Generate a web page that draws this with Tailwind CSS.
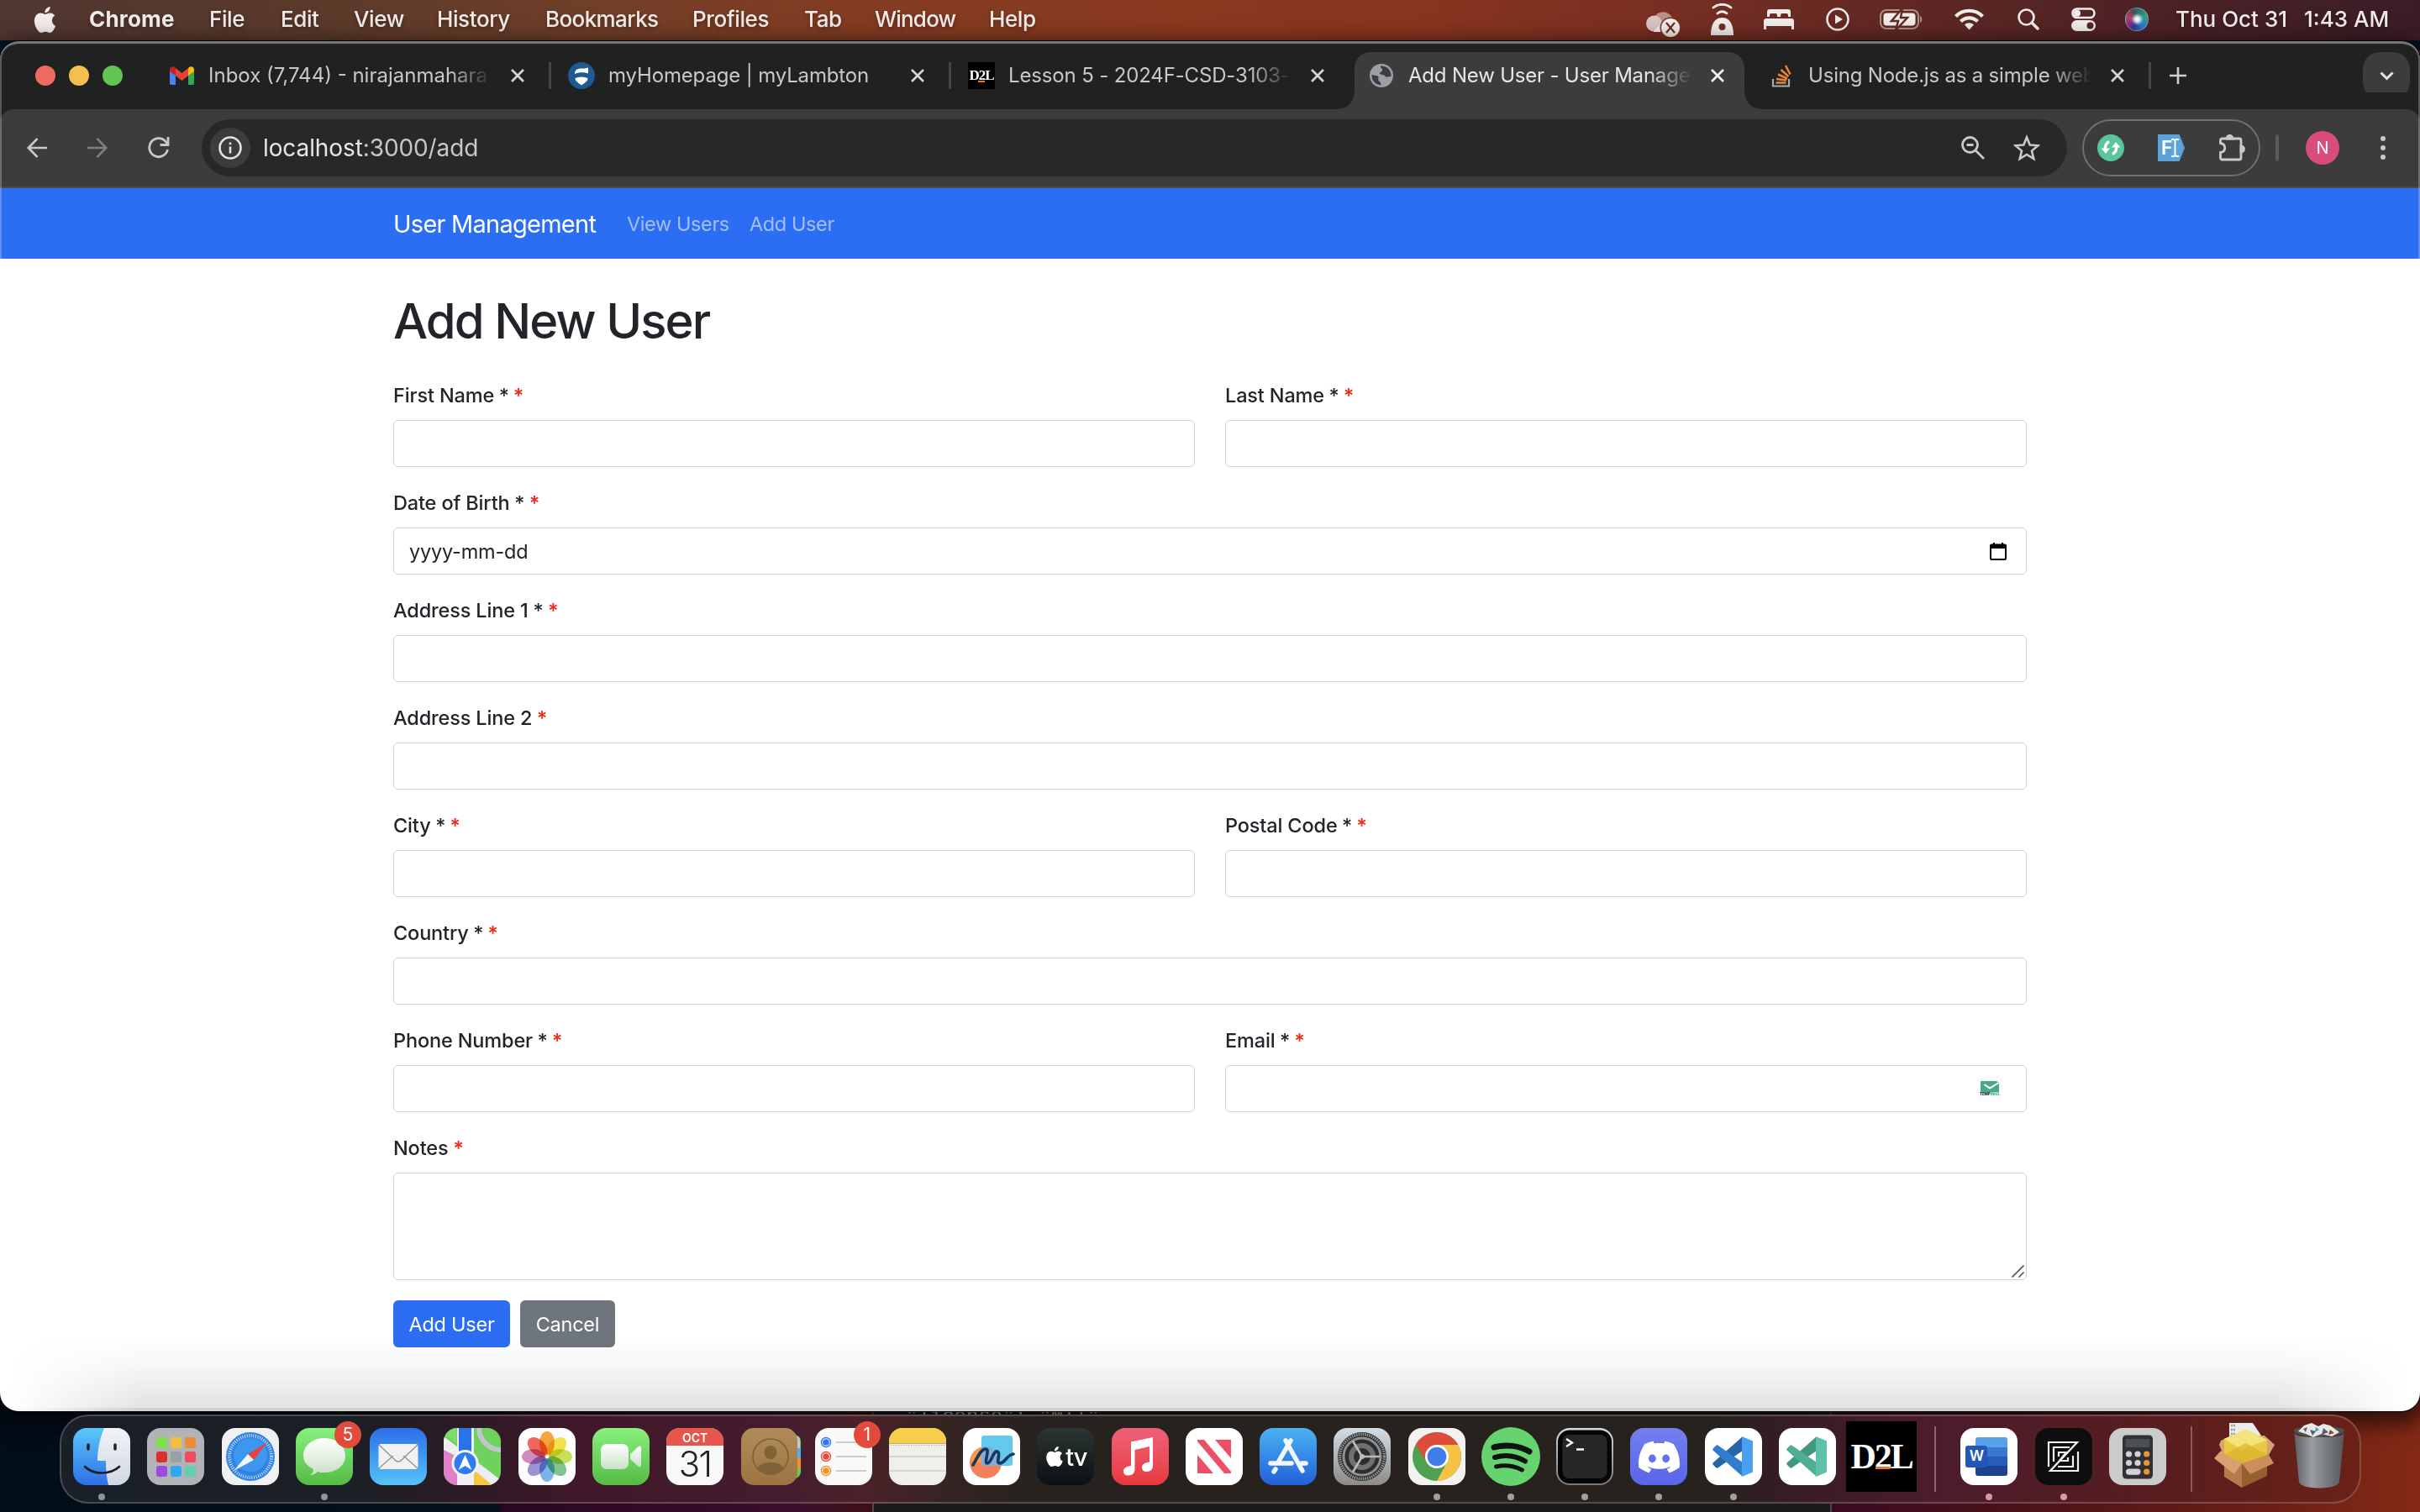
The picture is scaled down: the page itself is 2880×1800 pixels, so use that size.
<!DOCTYPE html>
<html lang="en">
<head>
<meta charset="utf-8">
<title>Add New User - User Management</title>
<script src="https://cdn.jsdelivr.net/npm/@tailwindcss/browser@4"></script>
</head>
<body class="relative h-[1800px] w-[2880px] overflow-hidden bg-[#04101c] font-['Inter','Liberation_Sans',sans-serif]">

<!-- Wallpaper -->
<div class="absolute inset-0 bg-[linear-gradient(90deg,#020d1a_0,#04101c_590px,#2a0720_600px,#3a0f2c_960px,#3d1015_1038px,#3a0a22_2178px,#4a1218_2400px,#6b1f15_2700px,#842a16_2880px)]"></div>
<div class="absolute inset-x-0 top-0 h-[60px] bg-[linear-gradient(90deg,#031730_0,#041a33_635px,#e8963c_636px,#c8622a_1200px,#a83c1c_1920px,#5a1a1c_2170px,#0a1730_2240px,#031022_2880px)]"></div>

<!-- Editor window behind the browser -->
<div class="absolute left-[1038px] top-[1600px] h-[200px] w-[1142px] border-x-2 border-[#4a4a4a] bg-[#1b1b1b] pl-[38px] pt-[73px] font-['Liberation_Mono',monospace] text-[24px] leading-[28px] text-[#c0c0c0]">"license": "MIT"</div>

<!-- Menu bar -->
<header class="relative flex h-12 items-center bg-[linear-gradient(90deg,#4f3631_0,#5c3a2a_400px,#703f28_700px,#823c22_1000px,#8a391f_1400px,#87351f_1700px,#792f22_1960px,#652923_2200px,#4c2226_2560px,#3a1d26_2880px)] pb-[2px] text-[26px] font-medium leading-[46px] text-[#f1ebe9] [text-shadow:0_2px_5px_rgba(0,0,0,0.35)]">
  <svg class="ml-[38px] size-[31px] shrink-0" viewBox="0 0 24 24" fill="#f1ebe9"><path d="M12.152 6.896c-.948 0-2.415-1.078-3.96-1.04-2.04.027-3.91 1.183-4.961 3.014-2.117 3.675-.546 9.103 1.519 12.09 1.013 1.454 2.208 3.09 3.792 3.039 1.52-.065 2.09-.987 3.935-.987 1.831 0 2.35.987 3.96.948 1.637-.026 2.676-1.48 3.676-2.948 1.156-1.688 1.636-3.325 1.662-3.415-.039-.013-3.182-1.221-3.22-4.857-.026-3.04 2.48-4.494 2.597-4.559-1.429-2.09-3.623-2.324-4.39-2.376-2-.156-3.675 1.09-4.61 1.09zM15.53 3.83c.843-1.012 1.4-2.427 1.245-3.83-1.207.052-2.662.805-3.532 1.818-.78.896-1.454 2.338-1.273 3.714 1.338.104 2.715-.688 3.559-1.701"/></svg>
  <nav class="flex pl-[37px] tracking-[-0.4px]">
    <span class="w-[143px] font-bold tracking-[0.2px]">Chrome</span>
    <span class="w-[85px]">File</span>
    <span class="w-[87px]">Edit</span>
    <span class="w-[99px]">View</span>
    <span class="w-[129px]">History</span>
    <span class="w-[175px] tracking-[-0.6px]">Bookmarks</span>
    <span class="w-[133px]">Profiles</span>
    <span class="w-[84px]">Tab</span>
    <span class="w-[136px] tracking-[-0.8px]">Window</span>
    <span>Help</span>
  </nav>
  <div class="ml-auto flex items-center">
    <svg class="mr-[36px] h-9 w-[42px] translate-y-1" viewBox="0 0 42 36"><path d="M10 13a12 12 0 0 1 23 2l-12 14z" fill="#b98e86"/><circle cx="10.500" cy="19" r="9.500" fill="#d9c4c0"/><path d="M10 28 24 14c6-1 9 2 10 6l-6 9H10z" fill="#f1ebe9"/><circle cx="30" cy="24" r="12.500" fill="#78301f"/><circle cx="30" cy="24" r="11" fill="#f1ebe9"/><path d="m25 18 10 12m0-12L25 30" stroke="#6b2c22" stroke-width="2.200"/></svg>
    <svg class="mr-[36px] h-[38px] w-[27px]" viewBox="0 0 27 38" fill="none" stroke="#f1ebe9"><path d="M3 5c6-5 15-5 21 0M8 12c3-3 8-3 11 0" stroke-width="2.800" stroke-linecap="round"/><path d="M0 38c0-10 3-21 13.500-21S27 28 27 38z" fill="#f1ebe9" stroke="none"/><circle cx="13.500" cy="28" r="4" fill="#742f23" stroke="none"/></svg>
    <svg class="mr-[38px] h-6 w-9" viewBox="0 0 36 24" fill="#f1ebe9"><path d="M4 9V3a3 3 0 0 1 3-3h22a3 3 0 0 1 3 3v6h-3V7a2 2 0 0 0-2-2h-5a2 2 0 0 0-2 2v2h-4V7a2 2 0 0 0-2-2H9a2 2 0 0 0-2 2v2z"/><path d="M0 24V14a3 3 0 0 1 3-3h30a3 3 0 0 1 3 3v10h-3v-4H3v4z"/></svg>
    <svg class="mr-[36px] size-[28px]" viewBox="0 0 28 28"><circle cx="14" cy="14" r="12.500" fill="none" stroke="#f1ebe9" stroke-width="2.500"/><path d="M11 8.500v11l9-5.500z" fill="#f1ebe9"/></svg>
    <svg class="mr-[37px] h-[26px] w-[52px]" viewBox="0 0 52 26"><rect x="1" y="2" width="45" height="22" rx="7" fill="none" stroke="#ad8d88" stroke-width="2"/><path d="M48 9c3 1 3 7 0 8z" fill="#ad8d88"/><rect x="4.500" y="5.500" width="38" height="15" rx="4" fill="#f1ebe9"/><path d="M27 0 14 15h8l-3 11 14-15h-8z" fill="#f1ebe9" stroke="#652923" stroke-width="2.500"/></svg>
    <svg class="mr-[40px] h-[26px] w-[35px]" viewBox="0 0 35 26" fill="none" stroke="#f1ebe9" stroke-width="4.200"><path d="M1.500 9.500C10 .5 25 .5 33.500 9.500"/><path d="M7.500 15.500c5.500-5.500 14.500-5.500 20 0"/><path d="M17.500 25.500 12 19.500c3-3 8-3 11 0z" fill="#f1ebe9" stroke="none"/></svg>
    <svg class="mr-[38px] size-[26px]" viewBox="0 0 26 26" fill="none" stroke="#f1ebe9"><circle cx="10.500" cy="10.500" r="9" stroke-width="2.600"/><path d="m17 17 7 7" stroke-width="3.600" stroke-linecap="round"/></svg>
    <svg class="mr-[35px] h-7 w-[29px]" viewBox="0 0 29 28"><rect x="1.500" y="1.500" width="26" height="10.500" rx="5.250" fill="none" stroke="#f1ebe9" stroke-width="2.600"/><circle cx="7" cy="6.700" r="4" fill="#f1ebe9"/><rect y="15" width="29" height="13" rx="6.500" fill="#f1ebe9"/><circle cx="22.500" cy="21.500" r="4" fill="#552528"/></svg>
    <span class="mr-[32px] block size-[28px] rounded-full border border-white/30 bg-[radial-gradient(circle_at_52%_50%,#fff_0,#d8e8f8_14%,transparent_38%),conic-gradient(#2f6b60,#2fa08a_20%,#2b78c8_40%,#2a3a9a_55%,#7a2f80_65%,#b8406a_78%,#504a52_92%,#2f6b60)]"></span>
    <span class="mr-[16px] w-[137px] whitespace-nowrap">Thu Oct 31</span>
    <span class="w-[100px] whitespace-nowrap">1:43 AM</span>
    <span class="w-[38px]"></span>
  </div>
</header>

<!-- Browser window -->
<div class="absolute left-0 top-[49px] flex h-[1631px] w-[2880px] flex-col overflow-hidden rounded-[22px] border-t-[3px] border-t-[#747776] bg-white shadow-[0_0_0_1px_#000,0_8px_24px_8px_rgba(0,0,0,0.6)]">
  <!-- Tab strip -->
  <div class="flex h-[78px] shrink-0 items-center bg-[#1f2221] pb-[2px] text-[24px] leading-[30px] tracking-[-0.15px] text-[#c7c8c7]">
    <div class="flex w-[180px] shrink-0 gap-4 pl-[42px]">
      <span class="size-6 rounded-full bg-[#ec6a5e]"></span><span class="size-6 rounded-full bg-[#f4bf4f]"></span><span class="size-6 rounded-full bg-[#61c554]"></span>
    </div>
    <div class="flex h-8 w-[476px] shrink-0 items-center border-r-[3px] border-[#434645] pl-[22px]">
      <svg class="h-[22px] w-[29px]" viewBox="0 0 29 22"><path d="M0 5v15a2 2 0 0 0 2 2h5V8z" fill="#4285f4"/><path d="M29 5v15a2 2 0 0 1-2 2h-5V8z" fill="#34a853"/><path d="M22 2v9l7-5V4c0-4-4-5-6.500-2.500z" fill="#fbbc04"/><path d="M7 2v9L0 6V4c0-4 4-5 6.500-2.500z" fill="#c5221f"/><path d="M7 2v9l7.500 6 7.500-6V2l-7.500 6z" fill="#ea4335"/></svg>
      <span class="ml-[17px] w-[340px] overflow-hidden whitespace-nowrap tracking-normal [mask-image:linear-gradient(90deg,#000_286px,transparent_338px)]">Inbox (7,744) - nirajanmahara</span>
      <svg class="ml-[19px] size-[18px]" viewBox="0 0 18 18" stroke="#d5d6d5" stroke-width="2.600"><path d="m2 2 14 14M16 2 2 16"/></svg>
    </div>
    <div class="flex h-8 w-[476px] shrink-0 items-center border-r-[3px] border-[#434645] pl-[20px]">
      <svg class="size-8" viewBox="0 0 32 32"><circle cx="16" cy="16" r="16" fill="#1f5a93"/><path d="M8 13.500c0-4 3-6 8-6 4 0 7-.5 8-1v7c-4-1.500-11-2-16 .5z" fill="#fff"/><path d="M8.500 19c5-2 10-2 15 0 0 4-4 6-7.500 8.500-3-2.500-7.500-4.500-7.500-8.500z" fill="#fff"/></svg>
      <span class="ml-4 w-[340px] whitespace-nowrap">myHomepage | myLambton</span>
      <svg class="ml-[19px] size-[18px]" viewBox="0 0 18 18" stroke="#d5d6d5" stroke-width="2.600"><path d="m2 2 14 14M16 2 2 16"/></svg>
    </div>
    <div class="flex h-8 w-[476px] shrink-0 items-center pl-[20px]">
      <span class="relative flex size-8 justify-center bg-black font-['Liberation_Serif',serif] text-[17px] font-bold leading-8 tracking-[-1px] text-white">D2L<i class="absolute bottom-[8px] left-[12px] h-[2px] w-[8px] bg-[#e87722]"></i></span>
      <span class="ml-4 w-[340px] overflow-hidden whitespace-nowrap [mask-image:linear-gradient(90deg,#000_286px,transparent_338px)]">Lesson 5 - 2024F-CSD-3103-</span>
      <svg class="ml-[19px] size-[18px]" viewBox="0 0 18 18" stroke="#d5d6d5" stroke-width="2.600"><path d="m2 2 14 14M16 2 2 16"/></svg>
    </div>
    <!-- Active tab -->
    <div class="relative flex h-[78px] w-[476px] shrink-0 items-center pl-[20px] text-[#e6e6e6]">
      <svg class="absolute left-[-20px] top-[11px] h-[68px] w-[512px]" viewBox="0 0 512 68" fill="#3c3c3c"><path d="M0 68c16 0 24-8 24-24V20C24 8 32 0 44 0h424c12 0 20 8 20 20v24c0 16 8 24 24 24z"/></svg>
      <svg class="relative ml-[2px] size-7" viewBox="0 0 28 28"><circle cx="14" cy="14" r="14" fill="#9aa0a8"/><path d="M13 2.500c-1 2 3 3 2 5.500-.5 2-3 1.500-3 3.500 0 1.500 4 1 6 2.500 1 3 4 1 7.500 1A11.500 11.500 0 0 0 13 2.500zM2.500 13c3 1 7 .5 8 2.500.5 2-1 3 0 4.500s3 1 3 5.500A11.600 11.600 0 0 1 2.500 13z" fill="#3c3c3c"/></svg>
      <span class="relative ml-[18px] w-[340px] overflow-hidden whitespace-nowrap tracking-[-0.2px] [mask-image:linear-gradient(90deg,#000_286px,transparent_338px)]">Add New User - User Manage</span>
      <svg class="relative ml-[19px] size-[18px]" viewBox="0 0 18 18" stroke="#f0f0f0" stroke-width="2.800"><path d="m2 2 14 14M16 2 2 16"/></svg>
    </div>
    <div class="flex h-8 w-[476px] shrink-0 items-center border-r-[3px] border-[#434645] pl-[24px]">
      <svg class="h-7 w-6" viewBox="0 0 24 28" fill="none"><path d="M2 18v8.500h19V18" stroke="#a9abae" stroke-width="2.200"/><path d="M5.500 22.500h12M6 18l12 1.500M8 12.500l11 5M11.500 7l9 8M17 2l5.500 10.500" stroke="#e8833a" stroke-width="2.600"/></svg>
      <span class="ml-[20px] w-[348px] overflow-hidden whitespace-nowrap tracking-[-0.2px] [mask-image:linear-gradient(90deg,#000_286px,transparent_338px)]">Using Node.js as a simple web</span>
      <svg class="ml-[11px] size-[18px]" viewBox="0 0 18 18" stroke="#d5d6d5" stroke-width="2.600"><path d="m2 2 14 14M16 2 2 16"/></svg>
    </div>
    <svg class="ml-[22px] size-5" viewBox="0 0 20 20" stroke="#cfd0cf" stroke-width="2.600"><path d="M10 0v20M0 10h20"/></svg>
    <span class="ml-auto mr-[12px] flex size-14 items-center justify-center rounded-[20px] bg-[#3c3c3c]"><svg class="h-[11px] w-[17px]" viewBox="0 0 17 11" fill="none" stroke="#e6e6e6" stroke-width="3"><path d="m1.500 1.500 7 7 7-7"/></svg></span>
  </div>

  <!-- Toolbar -->
  <div class="flex h-[94px] shrink-0 items-center rounded-t-[16px] border-b-2 border-[#4a4a4a] bg-[#3c3c3c] shadow-[0_-20px_0_0_#1f2221]">
    <svg class="ml-[32px] size-6" viewBox="0 0 24 24" fill="none" stroke="#c9c9c9" stroke-width="2.600"><path d="M24 12H2M12.500 1 1.800 12l10.700 11"/></svg>
    <svg class="ml-[48px] size-6" viewBox="0 0 24 24" fill="none" stroke="#7f7f7f" stroke-width="2.600"><path d="M0 12h22M11.500 1l10.700 11-10.700 11"/></svg>
    <svg class="ml-[48px] size-[26px]" viewBox="0 0 26 26" fill="none" stroke="#c9c9c9" stroke-width="2.800"><path d="M23.500 15A11 11 0 1 1 21.500 6L24 9"/><path d="M24 0v9.500h-9.500"/></svg>
    <div class="ml-[38px] flex h-[68px] w-[2220px] items-center rounded-full bg-[#282828] pl-[10px]">
      <span class="flex size-12 items-center justify-center rounded-full bg-[#3c3c3c]"><svg class="size-7" viewBox="0 0 28 28"><circle cx="14" cy="14" r="12.500" fill="none" stroke="#e3e3e3" stroke-width="2.600"/><path d="M12.700 12.500h2.600v8h-2.600zM12.700 7.500h2.600v2.800h-2.600z" fill="#e3e3e3"/></svg></span>
      <span class="ml-[15px] text-[28px] leading-9 tracking-[-0.1px] text-[#c7c7c7]"><span class="text-[#e6e6e6]">localhost</span>:3000/add</span>
      <svg class="ml-auto size-7" viewBox="0 0 28 28" fill="none" stroke="#c9c9c9" stroke-width="2.800"><circle cx="10.500" cy="10.500" r="9"/><path d="M6.500 10.500h8M17 17l10 10"/></svg>
      <svg class="ml-[34px] mr-[32px] size-8" viewBox="0 0 32 32" fill="none" stroke="#c9c9c9" stroke-width="2.600"><path d="m16 3.500 3.700 9 9.700.8-7.400 6.300 2.300 9.500L16 24l-8.300 5.100L10 19.600l-7.400-6.300 9.700-.8z"/></svg>
    </div>
    <div class="ml-[18px] flex h-[68px] w-[212px] items-center rounded-full border-2 border-[#707070] pl-4">
      <svg class="size-8" viewBox="0 0 32 32"><circle cx="16" cy="16" r="16" fill="#58c59a"/><g fill="none" stroke="#fff" stroke-width="3.400"><path d="M9.500 17c-.5-4 1-6.500 4.500-8.500M22.500 15c.5 4-1 6.500-4.500 8.500"/></g><path d="M4.500 16.500h10.500l-5 6.500zM27.500 15.500H17l5-6.500z" fill="#fff"/></svg>
      <span class="relative ml-[40px] flex h-8 w-8 items-center bg-[#5ca2dc] pl-[4px] text-[23px] font-semibold text-white [clip-path:polygon(0_0,80%_0,100%_50%,80%_100%,0_100%)]">F<svg class="absolute left-[15px] top-[5px] h-[22px] w-[11px]" viewBox="0 0 11 22" fill="none" stroke="#fff" stroke-width="2"><path d="M1 1h3l1.500 1L7 1h3M1 21h3l1.500-1L7 21h3M5.500 2v18"/></svg></span>
      <svg class="ml-[39px] h-[34px] w-[34px]" viewBox="0 0 34 34" fill="none" stroke="#c9c9c9" stroke-width="2.800"><path d="M5 6h6.500M17.500 6H26a2 2 0 0 1 2 2v21a2 2 0 0 1-2 2H5.500a2 2 0 0 1-2-2v-6.500c7-1 7-10 0-11V8a2 2 0 0 1 2-2z"/><path d="M11 6a3.500 3.500 0 0 1 7 0zM28 15a3.500 3.500 0 0 1 0 7z" fill="#c9c9c9"/></svg>
    </div>
    <span class="ml-[18px] h-8 w-[4px] rounded-full bg-[#5b5b5b]"></span>
    <span class="ml-8 flex size-10 items-center justify-center rounded-full bg-[#da4c7a] text-[20px] text-white">N</span>
    <span class="ml-[49px] flex flex-col gap-[5px]"><i class="size-[6px] rounded-full bg-[#c9c9c9]"></i><i class="size-[6px] rounded-full bg-[#c9c9c9]"></i><i class="size-[6px] rounded-full bg-[#c9c9c9]"></i></span>
  </div>

  <!-- Site navigation -->
  <div class="flex h-[84px] shrink-0 items-center bg-[#2b6ef3] pl-[468px] pt-[2px] text-[23.5px] tracking-[-0.4px] text-[#a3bff9]">
    <span class="w-[278px] text-[29px] tracking-[-0.75px] text-white">User Management</span>
    <span class="w-[146px]">View Users</span>
    <span>Add User</span>
  </div>

  <!-- Form page -->
  <main class="flex w-[2412px] flex-col pl-[468px] pt-9 text-[23.5px] leading-9 text-[#212529]">
    <h1 class="mb-9 h-[72px] pt-[2px] text-[58px] font-medium leading-[72px] tracking-[-1.9px]">Add New User</h1>
    <form class="grid grid-cols-2 gap-x-9 gap-y-6 tracking-[-0.15px] [&>label>span:first-child]:pt-[2px] [&>label>span:first-child]:leading-[34px]">
      <label class="flex flex-col gap-3 font-medium"><span>First Name<b class="font-medium tracking-[-0.7px]"> * <i class="font-semibold not-italic text-[#f02a1c]">*</i></b></span><input class="h-14 rounded-[6px] border border-[#ced4da]"></label>
      <label class="flex flex-col gap-3 font-medium"><span>Last Name<b class="font-medium tracking-[-0.7px]"> * <i class="font-semibold not-italic text-[#f02a1c]">*</i></b></span><input class="h-14 rounded-[6px] border border-[#ced4da]"></label>
      <label class="col-span-2 flex flex-col gap-3 font-medium"><span>Date of Birth<b class="font-medium tracking-[-0.5px]"> * <i class="font-semibold not-italic text-[#f02a1c]">*</i></b></span>
        <span class="flex h-14 items-center justify-between rounded-[6px] border border-[#ced4da] pl-[18px] pr-[23px] pt-px font-normal tracking-[-0.2px]">yyyy-mm-dd<svg class="h-6 w-5" viewBox="0 0 20 24"><path d="M4 1h2v3H4zM14 1h2v3h-2z"/><path fill-rule="evenodd" d="M2 2.500h16a2 2 0 0 1 2 2V20a2 2 0 0 1-2 2H2a2 2 0 0 1-2-2V4.500a2 2 0 0 1 2-2zM2 8v12h16V8z"/></svg></span></label>
      <label class="col-span-2 flex flex-col gap-3 font-medium"><span>Address Line 1<b class="font-medium tracking-[-0.5px]"> * <i class="font-semibold not-italic text-[#f02a1c]">*</i></b></span><input class="h-14 rounded-[6px] border border-[#ced4da]"></label>
      <label class="col-span-2 flex flex-col gap-3 font-medium"><span>Address Line 2<b class="font-medium tracking-[-1px]"> <i class="font-semibold not-italic text-[#f02a1c]">*</i></b></span><input class="h-14 rounded-[6px] border border-[#ced4da]"></label>
      <label class="flex flex-col gap-3 font-medium"><span>City<b class="font-medium tracking-[-0.7px]"> * <i class="font-semibold not-italic text-[#f02a1c]">*</i></b></span><input class="h-14 rounded-[6px] border border-[#ced4da]"></label>
      <label class="flex flex-col gap-3 font-medium"><span>Postal Code<b class="font-medium tracking-[-0.7px]"> * <i class="font-semibold not-italic text-[#f02a1c]">*</i></b></span><input class="h-14 rounded-[6px] border border-[#ced4da]"></label>
      <label class="col-span-2 flex flex-col gap-3 font-medium"><span>Country<b class="font-medium tracking-[-0.7px]"> * <i class="font-semibold not-italic text-[#f02a1c]">*</i></b></span><input class="h-14 rounded-[6px] border border-[#ced4da]"></label>
      <label class="flex flex-col gap-3 font-medium"><span>Phone Number<b class="font-medium tracking-[-0.7px]"> * <i class="font-semibold not-italic text-[#f02a1c]">*</i></b></span><input class="h-14 rounded-[6px] border border-[#ced4da]"></label>
      <label class="flex flex-col gap-3 font-medium"><span>Email<b class="font-medium tracking-[-0.7px]"> * <i class="font-semibold not-italic text-[#f02a1c]">*</i></b></span>
        <span class="flex h-14 items-center justify-end rounded-[6px] border border-[#ced4da] pr-7"><span class="flex size-[30px] flex-col items-center rounded-[3px] bg-[#fafafa] pt-[6px]"><svg class="h-[13px] w-[22px]" viewBox="0 0 22 13"><path d="M0 0h19l3 2v11H0z" fill="#4aa78c"/><path d="m4.500 4 6.500 4.500L21.500 2" fill="none" stroke="#fff" stroke-width="2"/></svg><span class="text-[4.500px] font-black leading-[6px] tracking-[-0.1px] text-[#1d3540]">TEMP<span class="text-[#4fc0a0]">MAIL</span></span></span></span></label>
      <label class="col-span-2 flex flex-col gap-3 font-medium"><span>Notes<b class="font-medium tracking-[-0.5px]"> <i class="font-semibold not-italic text-[#f02a1c]">*</i></b></span>
        <span class="flex h-32 items-end justify-end rounded-[6px] border border-[#ced4da] p-[2px]"><svg class="size-[15px]" viewBox="0 0 15 15" stroke="#555" stroke-width="1.600"><path d="M.5 14.500l14-14M8.500 14.500l6-6"/></svg></span></label>
      <div class="flex gap-3 tracking-[-0.25px]">
        <button class="h-14 w-[139px] rounded-[6px] bg-[#2b6ef3] pt-px text-white">Add User</button>
        <button class="h-14 w-[113px] rounded-[6px] bg-[#6e757c] pt-px text-white">Cancel</button>
      </div>
    </form>
  </main>
  <!-- Dock shade cast over the page -->
  <div class="absolute bottom-0 left-0 h-[90px] w-full border-b-4 border-[#cfcfd1] bg-[linear-gradient(180deg,rgba(0,0,0,0)_0,rgba(0,0,0,0.03)_40%,rgba(0,0,0,0.11)_100%)] [mask-image:linear-gradient(90deg,transparent_10px,#000_170px,#000_2710px,transparent_2866px)]"></div>
  <!-- Window edge highlight -->
  <div class="pointer-events-none absolute inset-0 rounded-[20px] border-x-2 border-white/25"></div>
</div>

<!-- Dock -->
<div class="absolute left-[71px] top-[1684px] flex h-[106px] w-[2739px] items-center rounded-[34px] border-2 border-white/20 bg-[linear-gradient(90deg,#1a2028_0,#1b1f26_340px,#2c1b24_480px,#401829_620px,#451c2e_850px,#4a2228_960px,#342422_1060px,#28221f_1160px,#28221f_1980px,#371c25_2060px,#4a1c2c_2220px,#571d20_2480px,#6b2217_2739px)] bg-origin-border pb-[6px] pl-[4px]">
  <!-- Finder -->
  <div class="relative flex w-[88.26px] shrink-0 justify-center">
    <svg class="size-[68px] rounded-[16px]" viewBox="0 0 68 68"><defs><linearGradient id="fb" x2="0" y2="1"><stop stop-color="#5ac8fa"/><stop offset="1" stop-color="#2f6fe8"/></linearGradient><linearGradient id="fw" x2="0" y2="1"><stop stop-color="#f2f2f5"/><stop offset="1" stop-color="#cfd8e4"/></linearGradient></defs><rect width="68" height="68" fill="url(#fb)"/><path d="M37 0c-5 12-8 25-8 39h10c0 12 1 21 3 29h26V0z" fill="url(#fw)"/><path d="M18 20v5M50 20v5" stroke="#222" stroke-width="3.500" stroke-linecap="round"/><path d="M14 46c10 10 30 10 41 0" fill="none" stroke="#1d1d22" stroke-width="2.600" stroke-linecap="round"/></svg>
    <i class="absolute top-[78px] size-2 rounded-full bg-[#8f959b]"></i>
  </div>
  <!-- Launchpad -->
  <div class="flex w-[88.26px] shrink-0 justify-center"><div class="grid size-[68px] grid-cols-[repeat(3,13px)] content-center justify-center gap-[4px] rounded-[16px] bg-[#b1b3b6]"><i class="size-[13px] rounded-[3px] bg-[#7ce04a]"></i><i class="size-[13px] rounded-[3px] bg-[#f4bd3b]"></i><i class="size-[13px] rounded-[3px] bg-[#ea8d35]"></i><i class="size-[13px] rounded-[3px] bg-[#d8302a]"></i><i class="size-[13px] rounded-[3px] bg-[#9aa0a4]"></i><i class="size-[13px] rounded-[3px] bg-[#ef4c62]"></i><i class="size-[13px] rounded-[3px] bg-[#9a4be0]"></i><i class="size-[13px] rounded-[3px] bg-[#2ea8f4]"></i><i class="size-[13px] rounded-[3px] bg-[#62cfb0]"></i></div></div>
  <!-- Safari -->
  <div class="flex w-[88.26px] shrink-0 justify-center"><svg class="size-[68px] rounded-[16px]" viewBox="0 0 68 68"><rect width="68" height="68" fill="#f1f1f1"/><circle cx="34" cy="34" r="29" fill="#2f83e8"/><circle cx="34" cy="34" r="25" fill="none" stroke="#d8ebff" stroke-width="4" stroke-dasharray=".9 1.720"/><circle cx="34" cy="32" r="20" fill="#3d97ee"/><path d="M54 17 38 38l-7-7z" fill="#e8403c"/><path d="M14 51 31 31l7 7z" fill="#f4f4f6"/></svg></div>
  <!-- Messages -->
  <div class="relative flex w-[88.26px] shrink-0 justify-center">
    <svg class="size-[68px] rounded-[16px]" viewBox="0 0 68 68"><defs><linearGradient id="gr" x2="0" y2="1"><stop stop-color="#88f07f"/><stop offset="1" stop-color="#55bb45"/></linearGradient><linearGradient id="wh" x2="0" y2="1"><stop stop-color="#fff"/><stop offset="1" stop-color="#c9e0c6"/></linearGradient></defs><rect width="68" height="68" fill="url(#gr)"/><path d="M34 12c14 0 25 9 25 21S48 53 34 53c-3 0-5 0-8-1-2 2-5 4-9 4 3-2 4-4 4-7C13 45 9 40 9 33c0-12 11-21 25-21z" fill="url(#wh)"/></svg>
    <span class="absolute right-0 top-[-8px] flex size-8 items-center justify-center rounded-full bg-[#e24b3b] text-[21px] text-white">5</span>
    <i class="absolute top-[78px] size-2 rounded-full bg-[#8f959b]"></i>
  </div>
  <!-- Mail -->
  <div class="flex w-[88.26px] shrink-0 justify-center"><svg class="size-[68px] rounded-[16px] bg-linear-to-b from-[#2f6de8] to-[#57c3f7]" viewBox="0 0 68 68"><rect x="10.500" y="19" width="47" height="30" rx="3" fill="#f1f1f1"/><path d="m11 48 17-15M57 48 40 33M11 20l19 18c2 2.500 6 2.500 8 0l19-18" fill="none" stroke="#9a9a9e" stroke-width="1.600"/></svg></div>
  <!-- Maps -->
  <div class="flex w-[88.26px] shrink-0 justify-center"><svg class="size-[68px] rounded-[16px]" viewBox="0 0 68 68"><rect width="68" height="68" fill="#6fd25f"/><path d="M0 10 68 62v6H44L0 30z" fill="#eceef2"/><path d="M0 26v42h16V34z" fill="#dd82c8"/><path d="M16 0h20v68H16z" fill="#f0f0f4"/><path d="M18 0h15v32H18z" fill="#2a72ec"/><path d="M0 0h15v18L0 8z" fill="#7ddc6c"/><path d="M36 68V50l22 18z" fill="#f5c842"/><path d="M42 0c0 14 12 26 26 26" fill="none" stroke="#c2c5cc" stroke-width="6"/><circle cx="25.500" cy="42" r="16" fill="#f3f4f8"/><circle cx="25.500" cy="42" r="13" fill="#2f7bf0"/><path d="m25.500 32 8 18-8-5-8 5z" fill="#fff"/></svg></div>
  <!-- Photos -->
  <div class="flex w-[88.26px] shrink-0 justify-center"><svg class="size-[68px] rounded-[16px] bg-[#fdfdfd]" viewBox="0 0 68 68"><ellipse class="mix-blend-multiply" cx="34" cy="18" rx="9" ry="14" fill="#f5a440"/><ellipse class="mix-blend-multiply" cx="34" cy="18" rx="9" ry="14" fill="#f2e44a" transform="rotate(45 34 34)"/><ellipse class="mix-blend-multiply" cx="34" cy="18" rx="9" ry="14" fill="#cbe05c" transform="rotate(90 34 34)"/><ellipse class="mix-blend-multiply" cx="34" cy="18" rx="9" ry="14" fill="#82c692" transform="rotate(135 34 34)"/><ellipse class="mix-blend-multiply" cx="34" cy="18" rx="9" ry="14" fill="#7ab8ea" transform="rotate(180 34 34)"/><ellipse class="mix-blend-multiply" cx="34" cy="18" rx="9" ry="14" fill="#a092d4" transform="rotate(225 34 34)"/><ellipse class="mix-blend-multiply" cx="34" cy="18" rx="9" ry="14" fill="#d08cc0" transform="rotate(270 34 34)"/><ellipse class="mix-blend-multiply" cx="34" cy="18" rx="9" ry="14" fill="#f06a5c" transform="rotate(315 34 34)"/></svg></div>
  <!-- FaceTime -->
  <div class="flex w-[88.26px] shrink-0 justify-center"><svg class="size-[68px] rounded-[16px]" viewBox="0 0 68 68"><rect width="68" height="68" fill="url(#gr)"/><rect x="10" y="19" width="33" height="30" rx="7" fill="url(#wh)"/><path d="M45 31 55 22c1.500-1 3-.5 3 1.500v21c0 2-1.500 2.500-3 1.500l-10-9z" fill="url(#wh)"/></svg></div>
  <!-- Calendar -->
  <div class="flex w-[88.26px] shrink-0 justify-center"><div class="flex size-[68px] flex-col items-center overflow-hidden rounded-[16px] bg-[#f8f8f8]"><span class="h-[21px] w-full bg-[#e5574c] text-center text-[14px] font-semibold leading-[23px] text-white">OCT</span><span class="text-[42px] font-light leading-[44px] tracking-[-1.5px] text-[#222]">31</span></div></div>
  <!-- Contacts -->
  <div class="flex w-[88.26px] shrink-0 justify-center"><svg class="h-[68px] w-[71px] translate-x-[2px]" viewBox="0 0 71 68"><rect x="40" y="8" width="31" height="52" rx="8" fill="#62cf62"/><path d="M66 10c3 0 4 3 4 6v8h-4z" fill="#c8c8c8"/><path d="M66 24h5v12h-5z" fill="#53aef0"/><path d="M66 36h5v12h-5z" fill="#f0902e"/><defs><linearGradient id="br" x2="0" y2="1"><stop stop-color="#b18c58"/><stop offset="1" stop-color="#9c7443"/></linearGradient></defs><rect width="67" height="68" rx="15" fill="url(#br)"/><circle cx="35" cy="34" r="21" fill="none" stroke="#7d6038" stroke-width="1.600"/><ellipse cx="35" cy="29" rx="7.500" ry="8" fill="#806238"/><path d="M20 47c4-8 26-8 30 0-7 10-23 10-30 0z" fill="#806238"/></svg></div>
  <!-- Reminders -->
  <div class="relative flex w-[88.26px] shrink-0 justify-center">
    <svg class="size-[68px] rounded-[16px] bg-[#f9f9f8]" viewBox="0 0 68 68"><g fill="none" stroke-width="1.400"><circle cx="13" cy="17" r="5.500" stroke="#2f78f0"/><circle cx="13" cy="34" r="5.500" stroke="#e24a3c"/><circle cx="13" cy="51" r="5.500" stroke="#ea9430"/></g><circle cx="13" cy="17" r="3.800" fill="#2f78f0"/><circle cx="13" cy="34" r="3.800" fill="#e24a3c"/><circle cx="13" cy="51" r="3.800" fill="#ea9430"/><path d="M25 17h36M25 34h36M25 51h36" stroke="#bdbdbd" stroke-width="1.500"/></svg>
    <span class="absolute right-0 top-[-8px] flex size-8 items-center justify-center rounded-full bg-[#e24b3b] text-[21px] text-white">1</span>
  </div>
  <!-- Notes -->
  <div class="flex w-[88.26px] shrink-0 justify-center"><svg class="size-[68px] rounded-[16px]" viewBox="0 0 68 68"><rect width="68" height="68" fill="#f0efec"/><rect width="68" height="18" fill="#f8cf4a"/><path d="M0 18.500h68" stroke="#b9a97c"/><path d="M2 20.500h66" stroke="#b5b5b2" stroke-dasharray="1.500 1.500"/><path d="M0 34h68M0 51h68" stroke="#cfcecb" stroke-width="1.500"/></svg></div>
  <!-- Freeform -->
  <div class="flex w-[88.26px] shrink-0 justify-center"><svg class="size-[68px] rounded-[16px] bg-white" viewBox="0 0 68 68"><circle cx="27" cy="41" r="19" fill="#f28058"/><path d="M8 40a19 19 0 0 1 19-18v19z" fill="#f6a64a" opacity=".7"/><rect x="22" y="9" width="37" height="36" rx="3" fill="#58c3ee" opacity=".92"/><path d="M22 23c10-3 22 6 24 20l-2 2H25a3 3 0 0 1-3-3z" fill="#8fa6d8" opacity=".75"/><path d="M12 44c5-8 9-19 15-19s-3 17 2 17 7-16 12-14-3 14 3 14 8-10 16-11" fill="none" stroke="#14395c" stroke-width="3.600" stroke-linecap="round"/></svg></div>
  <!-- Apple TV -->
  <div class="flex w-[88.26px] shrink-0 justify-center"><div class="flex size-[68px] items-center justify-center gap-[1px] rounded-[16px] bg-linear-to-b from-[#2b3634] to-[#0c1013] text-[29px] font-medium leading-none tracking-[-1px] text-white"><svg class="size-[24px]" viewBox="0 0 24 24" fill="#fff"><path d="M12.152 6.896c-.948 0-2.415-1.078-3.960-1.040-2.040.027-3.910 1.183-4.961 3.014-2.117 3.675-.546 9.103 1.519 12.090 1.013 1.454 2.208 3.090 3.792 3.039 1.520-.065 2.090-.987 3.935-.987 1.831 0 2.350.987 3.960.948 1.637-.026 2.676-1.480 3.676-2.948 1.156-1.688 1.636-3.325 1.662-3.415-.039-.013-3.182-1.221-3.220-4.857-.026-3.040 2.480-4.494 2.597-4.559-1.429-2.090-3.623-2.324-4.390-2.376-2-.156-3.675 1.090-4.610 1.090zM15.530 3.830c.843-1.012 1.400-2.427 1.245-3.830-1.207.052-2.662.805-3.532 1.818-.780.896-1.454 2.338-1.273 3.714 1.338.104 2.715-.688 3.559-1.701"/></svg>tv</div></div>
  <!-- Music -->
  <div class="flex w-[88.26px] shrink-0 justify-center"><svg class="size-[68px] rounded-[16px] bg-linear-to-b from-[#ee6177] to-[#e8383f]" viewBox="0 0 68 68" fill="#fff"><path d="M23 16.500 49 11v34c0 4-3 7-7 7s-6-2-6-5c0-5 6-6 9-6.500V22l-17.500 4v23c0 4.500-3 7.500-7.500 7.500-4 0-6-2-6-5 0-5 6-6 9-6.500z"/></svg></div>
  <!-- News -->
  <div class="flex w-[88.26px] shrink-0 justify-center"><svg class="size-[68px] rounded-[16px] bg-white" viewBox="0 0 68 68" fill="#ec4f66"><path d="M14 14h8l32 38v2h-8L14 16z"/><path d="M35 14h19v22zM14 32v22h19z"/></svg></div>
  <!-- App Store -->
  <div class="flex w-[88.26px] shrink-0 justify-center"><svg class="size-[68px] rounded-[16px] bg-linear-to-b from-[#4bb2f2] to-[#265fd8]" viewBox="0 0 68 68" fill="none" stroke="#f3f7fc" stroke-width="5.500" stroke-linecap="round"><path d="m37 15-15 26M31 15l20 36M13 42h25M50 42h5M19 49l-2 3"/></svg></div>
  <!-- Settings -->
  <div class="flex w-[88.26px] shrink-0 justify-center"><svg class="size-[68px] rounded-[16px] bg-linear-to-b from-[#d3dde2] to-[#8d8b89]" viewBox="0 0 68 68" fill="none"><circle cx="34" cy="34" r="29" fill="#2c2d2f"/><circle cx="34" cy="34" r="26.500" stroke="#9c9d9f" stroke-width="3.500" stroke-dasharray="1.400 1.200"/><circle cx="34" cy="34" r="22" stroke="#8e9092" stroke-width="3"/><circle cx="34" cy="34" r="13" stroke="#6e7072" stroke-width="6"/><path d="M34 34h21M34 34 23 15.500M34 34 23 52.500" stroke="#b9bbbd" stroke-width="2.600"/><circle cx="34" cy="34" r="3" fill="#b9bbbd"/></svg></div>
  <!-- Chrome -->
  <div class="relative flex w-[88.26px] shrink-0 justify-center">
    <svg class="size-[68px] rounded-[16px] bg-[#f3f2f1]" viewBox="0 0 68 68"><circle cx="34" cy="34" r="29" fill="#4fa152"/><path d="M34 20h25.200A29 29 0 0 1 34 63l12.100-22z" fill="#f6c244"/><path d="M8.900 19.500A29 29 0 0 1 59.200 20H34L21.900 41z" fill="#dd4b3a"/><circle cx="34" cy="34" r="14" fill="#fff"/><circle cx="34" cy="34" r="11.300" fill="#3f7de8"/></svg>
    <i class="absolute top-[78px] size-2 rounded-full bg-[#a39e9b]"></i>
  </div>
  <!-- Spotify -->
  <div class="relative flex w-[88.26px] shrink-0 justify-center">
    <svg class="-my-px size-[70px]" viewBox="0 0 70 70" fill="none" stroke="#10130f" stroke-linecap="round"><circle cx="35" cy="35" r="35" fill="#65d46e" stroke="none"/><path d="M15 24c14-4 30-2 42 5" stroke-width="7"/><path d="M16 36c12-3.500 25-2 36 4.500" stroke-width="6"/><path d="M17.500 47c11-2.500 21-1 31 4" stroke-width="5"/></svg>
    <i class="absolute top-[78px] size-2 rounded-full bg-[#a39e9b]"></i>
  </div>
  <!-- Terminal -->
  <div class="relative flex w-[88.26px] shrink-0 justify-center">
    <svg class="size-[68px]" viewBox="0 0 68 68"><defs><linearGradient id="te" x2="0" y2="1"><stop stop-color="#cfdde6"/><stop offset="1" stop-color="#77787a"/></linearGradient></defs><rect width="68" height="68" rx="16" fill="url(#te)"/><rect x="2" y="2.500" width="64" height="63.500" rx="14" fill="#050505"/><rect x="7.500" y="8" width="53" height="52" rx="8" fill="#262626"/><path d="m12 13 7 4.500-7 4.500M24 25.500h9" fill="none" stroke="#fff" stroke-width="2.300"/></svg>
    <i class="absolute top-[78px] size-2 rounded-full bg-[#a39e9b]"></i>
  </div>
  <!-- Discord -->
  <div class="relative flex w-[88.26px] shrink-0 justify-center">
    <div class="flex size-[68px] items-center justify-center rounded-[16px] bg-linear-to-b from-[#7380ee] to-[#5865ea]"><svg class="size-[49px]" viewBox="0 0 24 24" fill="#fff"><path d="M20.317 4.3698a19.7913 19.7913 0 00-4.8851-1.5152.0741.0741 0 00-.0785.0371c-.211.3753-.4447.8648-.6083 1.2495-1.8447-.2762-3.68-.2762-5.4868 0-.1636-.3933-.4058-.8742-.6177-1.2495a.077.077 0 00-.0785-.037 19.7363 19.7363 0 00-4.8852 1.515.0699.0699 0 00-.0321.0277C.5334 9.0458-.319 13.5799.0992 18.0578a.0824.0824 0 00.0312.0561c2.0528 1.5076 4.0413 2.4228 5.9929 3.0294a.0777.0777 0 00.0842-.0276c.4616-.6304.8731-1.2952 1.226-1.9942a.076.076 0 00-.0416-.1057c-.6528-.2476-1.2743-.5495-1.8722-.8923a.077.077 0 01-.0076-.1277c.1258-.0943.2517-.1923.3718-.2914a.0743.0743 0 01.0776-.0105c3.9278 1.7933 8.18 1.7933 12.0614 0a.0739.0739 0 01.0785.0095c.1202.099.246.1981.3728.2924a.077.077 0 01-.0066.1276 12.2986 12.2986 0 01-1.873.8914.0766.0766 0 00-.0407.1067c.3604.698.7719 1.3628 1.225 1.9932a.076.076 0 00.0842.0286c1.961-.6067 3.9495-1.5219 6.0023-3.0294a.077.077 0 00.0313-.0552c.5004-5.177-.8382-9.6739-3.5485-13.6604a.061.061 0 00-.0312-.0286zM8.02 15.3312c-1.1825 0-2.1569-1.0857-2.1569-2.419 0-1.3332.9555-2.4189 2.157-2.4189 1.2108 0 2.1757 1.0952 2.1568 2.419 0 1.3332-.9555 2.4189-2.1569 2.4189zm7.9748 0c-1.1825 0-2.1569-1.0857-2.1569-2.419 0-1.3332.9554-2.4189 2.1569-2.4189 1.2108 0 2.1757 1.0952 2.1568 2.419 0 1.3332-.946 2.4189-2.1568 2.4189Z"/></svg></div>
    <i class="absolute top-[78px] size-2 rounded-full bg-[#a39e9b]"></i>
  </div>
  <!-- VS Code -->
  <div class="relative flex w-[88.26px] shrink-0 justify-center">
    <svg class="size-[68px] rounded-[16px] bg-white" viewBox="0 0 68 68"><path d="M45 10v17L16 47c-1 1-2 1-3 0l-3-3c-1-1-1-2 0-3z" fill="#2565a8"/><path d="M45 58V41L16 21c-1-1-2-1-3 0l-3 3c-1 1-1 2 0 3z" fill="#2f7dcc"/><path d="m44 10 13 5.500v37L44 58z" fill="#4a9ff0"/></svg>
    <i class="absolute top-[78px] size-2 rounded-full bg-[#a39e9b]"></i>
  </div>
  <!-- VS Code Insiders -->
  <div class="flex w-[88.26px] shrink-0 justify-center"><svg class="size-[68px] rounded-[16px] bg-white" viewBox="0 0 68 68"><path d="M45 10v17L16 47c-1 1-2 1-3 0l-3-3c-1-1-1-2 0-3z" fill="#41987f"/><path d="M45 58V41L16 21c-1-1-2-1-3 0l-3 3c-1 1-1 2 0 3z" fill="#4fae94"/><path d="m44 10 13 5.500v37L44 58z" fill="#5dc0a8"/></svg></div>
  <!-- D2L -->
  <div class="flex h-[84px] w-[88.26px] shrink-0 justify-center"><div class="relative flex size-[84px] items-center justify-center bg-black font-['Liberation_Serif',serif] text-[42px] font-bold tracking-[-2px] text-white">D2L<i class="absolute left-[35px] top-[54px] h-[3px] w-[17px] bg-[#e87722]"></i></div></div>
  <span class="mx-[19px] h-[78px] w-[2px] shrink-0 translate-y-[3px] bg-[#8d6571]"></span>
  <!-- Word -->
  <div class="relative flex w-[88.26px] shrink-0 justify-center">
    <div class="relative flex size-[68px] items-center rounded-[16px] bg-white"><svg class="absolute left-[18px] top-[11px] h-[46px] w-[38px] rounded-[3px]" viewBox="0 0 38 46"><path fill="#56a2ea" d="M0 0h38v12H0z"/><path fill="#3a78d0" d="M0 12h38v11H0z"/><path fill="#2a5bbc" d="M0 23h38v11H0z"/><path fill="#1d428e" d="M0 34h38v12H0z"/></svg><span class="relative ml-[6px] flex h-[26px] w-[26px] items-center justify-center rounded-[3px] bg-[#2455b8] text-[17px] font-semibold text-white">W</span></div>
    <i class="absolute top-[78px] size-2 rounded-full bg-[#d99aa3]"></i>
  </div>
  <!-- Zed -->
  <div class="relative flex w-[88.26px] shrink-0 justify-center">
    <svg class="size-[68px] rounded-[16px] bg-[#0e0e0e]" viewBox="0 0 68 68" fill="none" stroke="#f2f2f2" stroke-width="2.200"><path d="M16 46V17h34L18 51h33V28"/><path d="M22 40V23h19M27 46h18V33M28 34v-5h9L29 39h10v-4"/></svg>
    <i class="absolute top-[78px] size-2 rounded-full bg-[#d99aa3]"></i>
  </div>
  <!-- Calculator -->
  <div class="flex w-[88.26px] shrink-0 justify-center"><svg class="size-[68px] rounded-[16px] bg-[#cbcbcb]" viewBox="0 0 68 68"><rect x="16" y="8.500" width="36" height="52" rx="4.500" fill="#2f3136"/><rect x="19.500" y="13" width="29" height="10" rx="1.500" fill="#4c4f55"/><g fill="#d2d2d2"><circle cx="23.500" cy="31" r="3.600"/><circle cx="34" cy="31" r="3.600"/><circle cx="23.500" cy="41.500" r="3.600"/><circle cx="34" cy="41.500" r="3.600"/><rect x="20" y="48.500" width="17.500" height="7.200" rx="3.600"/></g><g fill="#f0922f"><circle cx="44.700" cy="31" r="3.600"/><circle cx="44.700" cy="41.500" r="3.600"/><circle cx="44.700" cy="52" r="3.600"/></g></svg></div>
  <span class="mx-[19px] h-[78px] w-[2px] shrink-0 translate-y-[3px] bg-[#8d5a55]"></span>
  <!-- Package -->
  <div class="flex w-[88.26px] shrink-0 justify-center"><svg class="h-[78px] w-[74px] -translate-y-[2px]" viewBox="0 0 74 78"><path d="M18 1h28l12 18v18H18z" fill="#ececec"/><path d="M20 4h6M20 9h6M20 14h6" stroke="#9a9a9a" stroke-width="2.500" stroke-dasharray="2 1"/><path d="m8 22 12-6 40 0 12 11-8 14H12l-6-14z" fill="#dba071"/><path d="M12 50v15l21 13V49z" fill="#b67b4a"/><path d="M33 49v29l30-14V46z" fill="#94602f"/><path d="m0 43 8-9 25 15-9 13z" fill="#d9a172"/><path d="m33 49 29-15 9 15-28 13z" fill="#cc8e5c"/><path d="M12 20 38 9l25 12v18L33 49 12 38z" fill="#eacb3f" opacity=".95"/><path d="M12 20 38 9l25 12-30 12z" fill="#f5e27a"/><path d="M12 38 38 25l25 14-30 10z" fill="#d8b32c" opacity=".7"/></svg></div>
  <!-- Trash -->
  <div class="flex w-[88.26px] shrink-0 justify-center"><svg class="h-[78px] w-[62px] -translate-y-[1px]" viewBox="0 0 62 78"><defs><linearGradient id="tr"><stop stop-color="#5c6062"/><stop offset=".35" stop-color="#9a9da0"/><stop offset=".6" stop-color="#7d8184"/><stop offset="1" stop-color="#54585b"/></linearGradient></defs><path d="M1 8c0 7 4 9 30 9s30-2 30-9l-6 62c-1 10-47 10-48 0z" fill="url(#tr)"/><path d="M1 8c4-5 56-5 60 0 0 12-60 12-60 0z" fill="#4d5153"/><path d="m6 10 7-7 9-3 8 4 6-3 8 2 11 8-9 5-12-3-10 4-9-4z" fill="#e8e8e6"/><path d="m20 8 7 2-4 5zM36 6l6 5-8 3zM12 7l5-2-2 6z" fill="#55606a"/><path d="m27 5 4 3-5 3z" fill="#2fa0d0"/><path d="m44 8 5 4-7 2z" fill="#8c4636"/></svg></div>
</div>

</body>
</html>
